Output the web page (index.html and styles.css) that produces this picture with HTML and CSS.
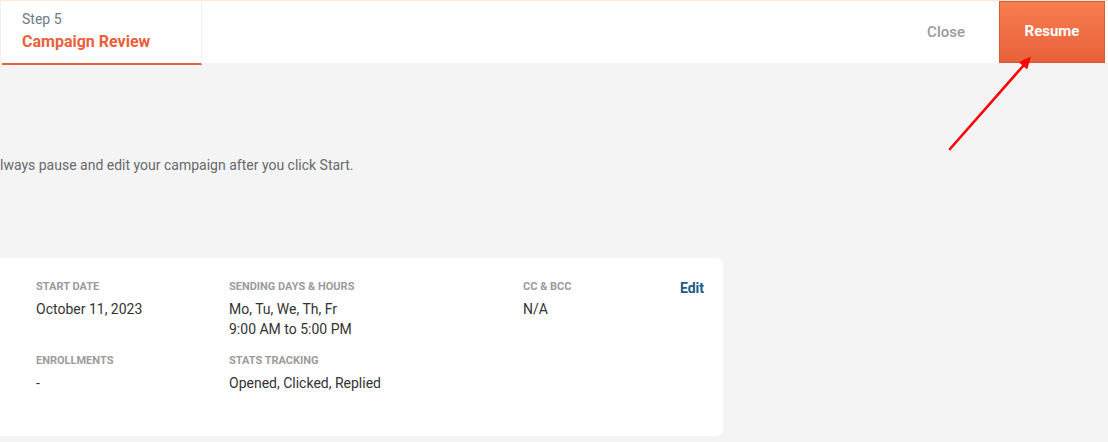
FILE: index.html
```html
<!DOCTYPE html>
<html lang="en">
<head>
<meta charset="utf-8">
<title>Campaign Review</title>
<link rel="stylesheet" href="styles.css">
</head>
<body>
<header class="topbar">
  <div class="tab">
    <div class="tab-step">Step 5</div>
    <div class="tab-title">Campaign Review</div>
  </div>
  <div class="actions">
    <button class="btn-close" type="button">Close</button>
    <button class="btn-resume" type="button">Resume</button>
  </div>
</header>
<main class="content">
  <p class="note">lways pause and edit your campaign after you click Start.</p>
  <section class="card">
    <div class="field">
      <div class="label">START DATE</div>
      <div class="value">October 11, 2023</div>
    </div>
    <div class="field">
      <div class="label">SENDING DAYS &amp; HOURS</div>
      <div class="value">Mo, Tu, We, Th, Fr<br>9:00 AM to 5:00 PM</div>
    </div>
    <div class="field">
      <div class="label">CC &amp; BCC</div>
      <div class="value">N/A</div>
    </div>
    <a class="edit" href="#">Edit</a>
    <div class="field">
      <div class="label">ENROLLMENTS</div>
      <div class="value">-</div>
    </div>
    <div class="field">
      <div class="label">STATS TRACKING</div>
      <div class="value">Opened, Clicked, Replied</div>
    </div>
  </section>
</main>
<svg class="annotation" width="1108" height="442" viewBox="0 0 1108 442" aria-hidden="true">
  <line x1="950" y1="149" x2="1024" y2="65" stroke="#ff0000" stroke-width="2.6" stroke-linecap="round"/>
  <polygon points="1031,56.5 1027.2,69.5 1018.8,62.3" fill="#ff0000"/>
</svg>
</body>
</html>
```

FILE: styles.css
```css
* { box-sizing: border-box; }

html, body {
  margin: 0;
  padding: 0;
}

body {
  background: #f4f4f4;
  font-family: Roboto, "Liberation Sans", Arial, sans-serif;
  color: #333;
  width: 1108px;
  height: 442px;
  overflow: hidden;
  position: relative;
}

.topbar {
  display: flex;
  justify-content: space-between;
  align-items: stretch;
  height: 63px;
  background: #fff;
  border-top: 1px solid #fde9d3;
  border-left: 1px solid #f1f1f1;
}

.tab {
  width: 200px;
  margin-left: 1px;
  padding: 9px 0 0 20px;
  border-right: 1px solid #f0f0f0;
  border-bottom: 2px solid #e9603a;
  margin-bottom: -2px;
}

.tab-step {
  font-size: 14px;
  line-height: 18px;
  color: #6d7b88;
}

.tab-title {
  margin-top: 3px;
  font-size: 16px;
  line-height: 22px;
  font-weight: 700;
  color: #e9603a;
}

.actions {
  display: flex;
  align-items: stretch;
  margin-right: 3px;
}

.btn-close {
  font-family: inherit;
  font-size: 15px;
  font-weight: 500;
  color: #9a9a9a;
  background: transparent;
  border: 0;
  padding: 0 34px 0 34px;
  cursor: pointer;
}

.btn-resume {
  font-family: inherit;
  font-size: 15px;
  font-weight: 700;
  color: #fff;
  width: 106px;
  background: linear-gradient(#f77d4f, #e8613b);
  border: 1px solid #d65a33;
  padding: 0 0 2px 0;
  cursor: pointer;
}

.content {
  padding: 0;
}

.note {
  margin: 92px 0 0 0;
  font-size: 14px;
  line-height: 20px;
  color: #666a6e;
}

.card {
  margin-top: 83px;
  width: 723px;
  background: #fff;
  border-radius: 0 7px 7px 0;
  padding: 22px 19px 43px 36px;
  display: grid;
  grid-template-columns: 193px 294px 1fr auto;
  row-gap: 15px;
  align-items: start;
}

.label {
  font-size: 11px;
  line-height: 14px;
  font-weight: 700;
  color: #9b9b9b;
}

.value {
  margin-top: 5px;
  font-size: 14px;
  line-height: 20px;
  color: #333;
}

.edit {
  font-size: 14px;
  line-height: 20px;
  font-weight: 700;
  color: #1d5b88;
  text-decoration: none;
  margin-top: -2px;
}

.annotation {
  position: absolute;
  left: 0;
  top: 0;
  pointer-events: none;
}
```
